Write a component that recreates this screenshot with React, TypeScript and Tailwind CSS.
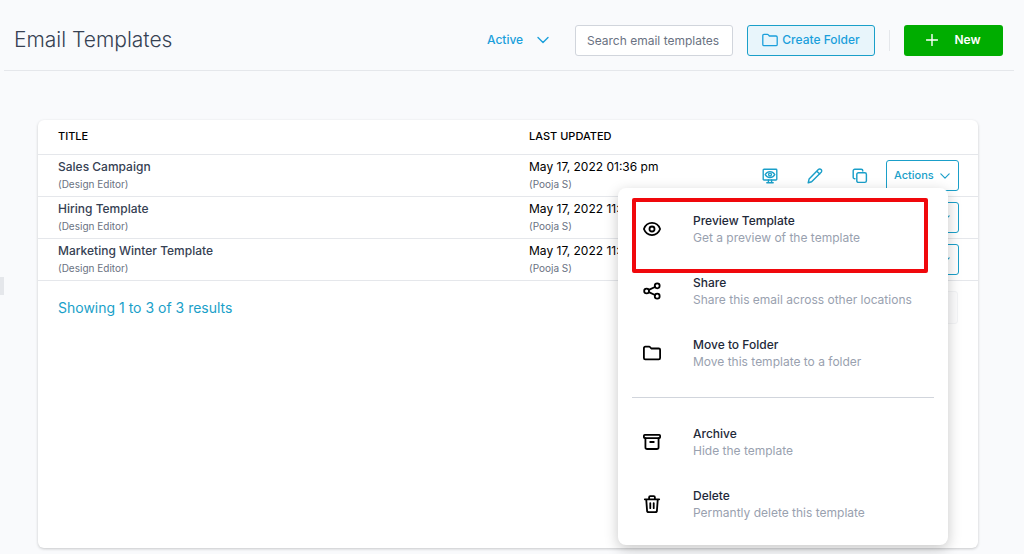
import { useState } from "react";
import type { ReactNode } from "react";

const TEMPLATES = [
  { title: "Sales Campaign", editor: "Design Editor", updated: "May 17, 2022 01:36 pm", by: "Pooja S" },
  { title: "Hiring Template", editor: "Design Editor", updated: "May 17, 2022 11:42 am", by: "Pooja S" },
  { title: "Marketing Winter Template", editor: "Design Editor", updated: "May 17, 2022 11:38 am", by: "Pooja S" },
];

function Icon({ className, width = 2, children }: { className: string; width?: number; children: ReactNode }) {
  return (
    <svg
      viewBox="0 0 20 20"
      fill="none"
      stroke="currentColor"
      strokeWidth={width}
      strokeLinecap="round"
      strokeLinejoin="round"
      className={className}
      aria-hidden="true"
    >
      {children}
    </svg>
  );
}

function ChevronDown({ className }: { className: string }) {
  return (
    <svg viewBox="0 0 12 8" fill="none" stroke="currentColor" strokeWidth="1.4" strokeLinecap="round" strokeLinejoin="round" className={className} aria-hidden="true">
      <path d="M1 1.5l5 5 5-5" />
    </svg>
  );
}

const folderPath = "M1 15.500V4.500A1.500 1.500 0 0 1 2.500 3h4.300c.5 0 .9.2 1.200.6L9.200 5h8.300A1.500 1.500 0 0 1 19 6.500v9a1.500 1.500 0 0 1-1.500 1.500h-15A1.500 1.500 0 0 1 1 15.500z";

const MAIN_ITEMS = [
  {
    title: "Preview Template",
    text: "Get a preview of the template",
    highlight: true,
    icon: (
      <>
        <path d="M1 10C2.600 5.800 6 3.300 10 3.300s7.400 2.500 9 6.700c-1.600 4.200-5 6.700-9 6.700S2.600 14.200 1 10z" />
        <circle cx="10" cy="10" r="2.800" />
      </>
    ),
  },
  {
    title: "Share",
    text: "Share this email across other locations",
    icon: (
      <>
        <circle cx="4" cy="10" r="2.700" />
        <circle cx="15.800" cy="4.300" r="2.700" />
        <circle cx="15.800" cy="15.700" r="2.700" />
        <path d="M6.500 8.800l6.800-3.300M6.500 11.200l6.800 3.300" />
      </>
    ),
  },
  { title: "Move to Folder", text: "Move this template to a folder", icon: <path d={folderPath} /> },
];

const DANGER_ITEMS = [
  {
    title: "Archive",
    text: "Hide the template",
    icon: (
      <>
        <rect x="1" y="2" width="18" height="3.600" rx="1" />
        <path d="M2.700 5.800V15.800a2 2 0 0 0 2 2h10.600a2 2 0 0 0 2-2V5.800M8 10h4" />
      </>
    ),
  },
  {
    title: "Delete",
    text: "Permantly delete this template",
    icon: (
      <>
        <path d="M2 4.800h16M3.600 4.800l.9 12.300A1.900 1.900 0 0 0 6.400 19h7.200a1.900 1.900 0 0 0 1.900-1.900l.9-12.300M6.800 4.600V2.500a1.300 1.300 0 0 1 1.300-1.300h3.800a1.300 1.300 0 0 1 1.300 1.300v2.100M8.100 9v5.600M11.900 9v5.600" />
      </>
    ),
  },
];

type Item = { title: string; text: string; highlight?: boolean; icon: ReactNode };

function MenuItem({ item }: { item: Item }) {
  return (
    <div className="relative">
      <button type="button" role="menuitem" className="flex h-[62px] w-full items-center gap-8 pl-[11px] text-left">
        <Icon className="size-[18px] shrink-0 text-black">{item.icon}</Icon>
        <span className="flex flex-col text-xs leading-[17px] whitespace-nowrap">
          <span className="font-medium text-gray-800">{item.title}</span>
          <span className="text-gray-400">{item.text}</span>
        </span>
      </button>
      {item.highlight && <div className="pointer-events-none absolute top-0 right-1.5 left-0 h-[75px] rounded-[2px] border-4 border-[#f0080c]" />}
    </div>
  );
}

function ActionsMenu() {
  return (
    <div role="menu" className="absolute top-7 right-[11px] z-10 w-[330px] rounded-lg bg-white px-3.5 py-2.5 shadow-[0_4px_14px_rgba(0,0,0,0.22)]">
      {MAIN_ITEMS.map((item) => (
        <MenuItem key={item.title} item={item} />
      ))}
      <hr className="my-[13px] border-gray-300" />
      {DANGER_ITEMS.map((item) => (
        <MenuItem key={item.title} item={item} />
      ))}
    </div>
  );
}

function RowActions({ open, onToggle }: { open: boolean; onToggle: () => void }) {
  return (
    <div className="flex items-center justify-end text-[#1a9fc9]">
      <div className="mr-[18px] flex gap-[29px]">
        <button type="button" aria-label="Preview">
          <Icon className="size-4" width={1.7}>
            <rect x="1.500" y="1.500" width="17" height="13.500" rx="1" />
            <path d="M4 8.200C5.600 5.700 7.600 4.500 10 4.500s4.400 1.200 6 3.700c-1.600 2.500-3.600 3.700-6 3.700s-4.400-1.200-6-3.700zM8 15v3.500M12 15v3.500M6 18.500h8" />
            <circle cx="10" cy="8.200" r="1.800" />
          </Icon>
        </button>
        <button type="button" aria-label="Edit">
          <Icon className="size-4" width={1.8}>
            <path d="M14.200 2a2.300 2.300 0 0 1 3.500 3.300L5.800 17.200 1.500 18.500l1.100-4.600zM12.300 4l3.600 3.600" />
          </Icon>
        </button>
        <button type="button" aria-label="Duplicate">
          <Icon className="size-4" width={1.8}>
            <rect x="6" y="6" width="12" height="12" rx="2" />
            <path d="M3.700 13.500H3.500a2 2 0 0 1-2-2v-8a2 2 0 0 1 2-2h8a2 2 0 0 1 2 2v.2" />
          </Icon>
        </button>
      </div>
      <div className="relative">
        <button
          type="button"
          onClick={onToggle}
          aria-expanded={open}
          className="flex h-[31px] w-[73px] items-center justify-between rounded-[3px] border border-[#1a9fc9] bg-white pr-2 pl-[7px] text-[11px] font-medium"
        >
          Actions
          <ChevronDown className="h-2 w-2.5" />
        </button>
        {open && <ActionsMenu />}
      </div>
    </div>
  );
}

export default function App() {
  const [openRow, setOpenRow] = useState(0);
  const [status, setStatus] = useState("Active");
  const [search, setSearch] = useState("");

  return (
    <div className="relative flex min-h-screen flex-col bg-[#f9fafc] font-[Inter,sans-serif] text-xs text-black">
      <header className="mr-2.5 ml-1 flex h-[71px] items-center justify-between border-b border-gray-200 pt-2.5 pr-[11px] pl-2.5">
        <h1 className="text-[21px] font-light text-gray-700">Email Templates</h1>
        <div className="flex items-center gap-3.5">
          <div className="relative mr-3 flex items-center text-[#1a9fdb]">
            <select
              aria-label="Status"
              value={status}
              onChange={(e) => setStatus(e.target.value)}
              className="w-[62px] appearance-none bg-transparent font-medium"
            >
              <option>Active</option>
              <option>Archived</option>
            </select>
            <ChevronDown className="pointer-events-none absolute right-0 h-2 w-3" />
          </div>
          <input
            type="text"
            aria-label="Search email templates"
            placeholder="Search email templates"
            value={search}
            onChange={(e) => setSearch(e.target.value)}
            className="h-[31px] w-[158px] rounded-[3px] border border-gray-300 bg-white px-[11px] placeholder:text-gray-500"
          />
          <button type="button" className="flex h-[31px] w-32 items-center justify-center gap-1 rounded-[3px] border border-[#1a9fc9] bg-[#e8f5fb] font-medium text-[#1a9fdb]">
            <Icon className="size-4" width={1.6}>
              <path d={folderPath} />
            </Icon>
            Create Folder
          </button>
          <div className="h-[21px] w-px bg-gray-200" />
          <button type="button" className="flex h-[31px] w-[99px] items-center justify-center gap-4 rounded-[3px] bg-[#00ad00] font-semibold text-white">
            <svg viewBox="0 0 12 12" stroke="currentColor" strokeWidth="1.4" strokeLinecap="round" className="size-3" aria-hidden="true">
              <path d="M6 .5v11M.5 6h11" />
            </svg>
            New
          </button>
        </div>
      </header>

      <button type="button" aria-label="Expand sidebar" className="absolute top-[277px] left-0 h-[18px] w-1 bg-gray-200" />

      <main className="mt-[49px] mr-[46px] mb-1.5 ml-[38px] flex-1 rounded-md bg-white shadow-[0_1px_3px_rgba(0,0,0,0.2)]">
        <table className="w-full table-fixed border-separate border-spacing-0 text-left">
          <thead>
            <tr className="text-[11px]">
              <th scope="col" className="h-[35px] w-1/2 border-b border-gray-200 pb-0.5 pl-5 font-medium">TITLE</th>
              <th scope="col" className="w-1/5 border-b border-gray-200 pb-0.5 pl-[21px] font-medium">LAST UPDATED</th>
              <th scope="col" aria-label="Actions" className="border-b border-gray-200" />
            </tr>
          </thead>
          <tbody>
            {TEMPLATES.map((t, i) => (
              <tr key={t.title}>
                <td className="h-[42px] border-b border-gray-200 pl-5">
                  <div className="leading-[18px] font-medium text-gray-700">{t.title}</div>
                  <div className="text-[10px] leading-[17px] text-gray-500">({t.editor})</div>
                </td>
                <td className="border-b border-gray-200 pl-[21px] whitespace-nowrap">
                  <div className="leading-[18px]">{t.updated}</div>
                  <div className="text-[10px] leading-[17px] text-gray-500">({t.by})</div>
                </td>
                <td className="border-b border-gray-200 pr-[19px]">
                  <RowActions open={openRow === i} onToggle={() => setOpenRow(openRow === i ? -1 : i)} />
                </td>
              </tr>
            ))}
          </tbody>
        </table>
        <div className="flex items-center justify-between px-5 pt-2.5">
          <p className="text-sm text-[#1a9fc9]">Showing 1 to 3 of 3 results</p>
          <button type="button" disabled aria-label="Next page" className="h-[33px] w-9 rounded-[3px] border border-gray-100 bg-gray-50/50" />
        </div>
      </main>
    </div>
  );
}
